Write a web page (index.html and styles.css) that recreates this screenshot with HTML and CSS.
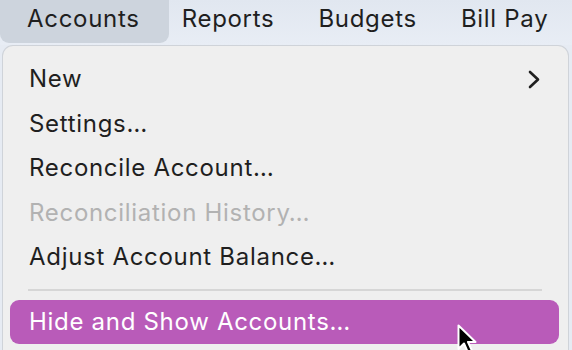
FILE: index.html
```html
<!DOCTYPE html>
<html lang="en">
<head>
    <meta charset="UTF-8">
    <meta name="viewport" content="width=device-width, initial-scale=1.0">
    <title>Accounts Menu</title>
    <link rel="stylesheet" href="styles.css">
</head>
<body>
    <div class="menubar">
        <div class="menubar-item active">Accounts</div>
        <div class="menubar-item">Reports</div>
        <div class="menubar-item">Budgets</div>
        <div class="menubar-item">Bill Pay</div>
    </div>

    <div class="menu">
        <div class="menu-item">
            <span>New</span>
            <svg class="chevron" width="12" height="19" viewBox="0 0 12 19">
                <path d="M2 2 L10 9.5 L2 17" fill="none" stroke="#1f1f1f" stroke-width="2.6" stroke-linecap="round" stroke-linejoin="round"/>
            </svg>
        </div>
        <div class="menu-item">Settings…</div>
        <div class="menu-item">Reconcile Account…</div>
        <div class="menu-item disabled">Reconciliation History…</div>
        <div class="menu-item">Adjust Account Balance…</div>
        <div class="menu-separator"></div>
        <div class="menu-item selected">Hide and Show Accounts…</div>
    </div>

    <svg class="cursor" width="26" height="34" viewBox="0 0 26 34">
        <path d="M1.5 1.5 L1.5 25 L7 19.5 L11 28.5 L15 26.8 L11 18 L18.5 18 Z" fill="#000" stroke="#fff" stroke-width="2" stroke-linejoin="round"/>
    </svg>
</body>
</html>
```

FILE: styles.css
```css
body { margin: 0; background: #e6ebf3; font-family: Inter, "Liberation Sans", sans-serif; letter-spacing: 0.7px; overflow: hidden; height: 350px; position: relative; }

.menubar { display: flex; height: 45px; background: linear-gradient(#e1e7f0, #e8edf5); color: #1f1f1f; font-size: 24px; }
.menubar-item { line-height: 37px; padding: 0 22px 6px; height: 37px; }
.menubar-item.active { padding-left: 27px; padding-right: 29px; background: #cdd4dd; border-radius: 0 0 9px 9px; }
.menubar-item.active + .menubar-item { padding-left: 13px; }

.menu { margin: 0 3px 0 2px; height: 320px; padding-top: 11px; background: #efefef; border: 1px solid #cfd3d9; border-bottom: none; border-radius: 11px 11px 0 0; box-sizing: border-box; }
.menu-item { display: flex; justify-content: space-between; align-items: center; height: 44.5px; line-height: 44.5px; margin: 0 9px 0 7px; padding: 0 19px; font-size: 24px; color: #1f1f1f; }
.menu-item.disabled { color: #b2b2b2; }
.menu-item.selected { background: #b95bb9; color: #fff; border-radius: 9px; height: 44px; line-height: 44px; }
.menu-separator { height: 2px; background: #d6d6d6; margin: 9px 26px 9px 25px; }
.chevron { display: block; }

.cursor { position: absolute; left: 457px; top: 324px; }
```
